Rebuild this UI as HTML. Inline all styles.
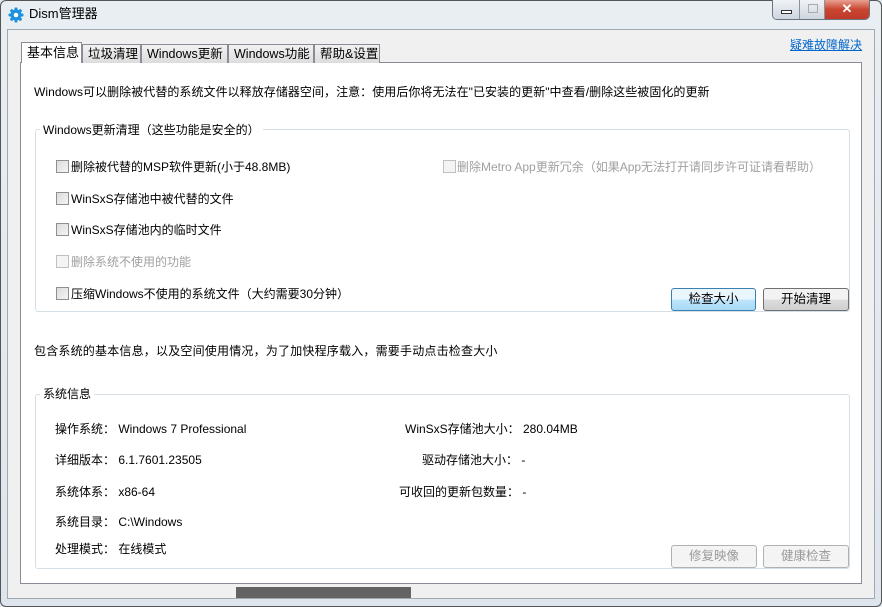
<!DOCTYPE html>
<html><head><meta charset="utf-8"><style>
*{margin:0;padding:0;box-sizing:border-box}
body{width:882px;height:607px;overflow:hidden;background:#dfe6ee;font-family:"Liberation Sans","Noto Sans CJK SC",sans-serif;font-size:12px;color:#000;position:relative}
.a{position:absolute}
.win{left:0;top:0;width:882px;height:607px;border:1px solid #555;border-radius:6px;background:linear-gradient(#e9eef3,#dfe5ec)}
.client{left:7px;top:29px;width:868px;height:570px;background:#f0f0f0;border:1px solid #a0a8b0}
.panel{left:20px;top:62px;width:842px;height:522px;background:#fff;border:1px solid #898c95}
.tab{top:44px;height:19px;border:1px solid #898c95;border-bottom:none;background:linear-gradient(#f2f2f2,#dcdcdc);font-size:12.5px;padding:1px 5px;line-height:16px;white-space:nowrap}
.group{border:1px solid #d5dfe5;border-radius:3px}
.leg{background:#fff;padding:0 3px;font-size:12px;line-height:14px}
.cb{width:13px;height:13px;border:1px solid #8e8f8f;background:linear-gradient(135deg,#dcdcdc,#f4f4f4)}
.t{font-size:12px;line-height:14px;white-space:nowrap}
.btn{height:23px;border:1px solid #707070;border-radius:3px;background:linear-gradient(#f2f2f2 50%,#dddddd 50%,#cfcfcf);text-align:center;line-height:21px;font-size:12.5px}
.dis{color:#a0a0a0}
.btnd{border-color:#adb2b5;background:#f4f4f4;color:#9a9a9a}
</style></head><body>
<div class="a win"></div>
<svg class="a" style="left:8px;top:7px" width="16" height="16" viewBox="0 0 16 16"><g fill="#1e90e0"><circle cx="8" cy="8" r="5.5"/><rect x="6.5" y="0.5" width="3" height="15" rx="1"/><rect x="0.5" y="6.5" width="15" height="3" rx="1"/><rect x="6.5" y="0.5" width="3" height="15" rx="1" transform="rotate(45 8 8)"/><rect x="6.5" y="0.5" width="3" height="15" rx="1" transform="rotate(-45 8 8)"/></g><circle cx="8" cy="8" r="2.3" fill="#fff"/></svg>
<div class="a t" style="left:29px;top:7px;font-size:13px">Dism管理器</div>
<div class="a" style="left:772px;top:0;width:98px;height:20px;border:1px solid #6a7480;border-top:none;border-radius:0 0 5px 5px;overflow:hidden;display:flex">
<div style="width:27px;background:linear-gradient(#f0f3f6,#cdd5de);border-right:1px solid #8a929c;position:relative"><div class="a" style="left:8px;top:10px;width:11px;height:4px;border:1px solid #333;background:#fff"></div></div>
<div style="width:25px;background:linear-gradient(#f0f3f6,#cdd5de);border-right:1px solid #8a929c;position:relative"><div class="a" style="left:8px;top:4px;width:10px;height:9px;border:1px solid #aaa"></div></div>
<div style="flex:1;background:linear-gradient(#e8a090,#c8452f 50%,#c0392b);color:#fff;text-align:center;font-weight:bold;font-size:13px;line-height:18px">✕</div></div>
<div class="a client"></div>
<div class="a t" style="left:790px;top:38px;color:#0066cc;text-decoration:underline">疑难故障解决</div>
<div class="a panel"></div>
<div class="a tab" style="left:21px;top:42px;height:21px;background:#fff;width:61px;font-size:13px;padding-top:2px">基本信息</div>
<div class="a tab" style="left:82px;width:59px">垃圾清理</div>
<div class="a tab" style="left:141px;width:87px">Windows更新</div>
<div class="a tab" style="left:228px;width:86px">Windows功能</div>
<div class="a tab" style="left:314px;width:66px">帮助&amp;设置</div>
<div class="a t" style="left:34px;top:85px;letter-spacing:0.05px">Windows可以删除被代替的系统文件以释放存储器空间，注意：使用后你将无法在"已安装的更新"中查看/删除这些被固化的更新</div>
<div class="a group" style="left:35px;top:129px;width:815px;height:183px"></div>
<div class="a leg" style="left:40px;top:123px">Windows更新清理（这些功能是安全的）</div>
<div class="a cb" style="left:56px;top:160px"></div><div class="a t" style="left:71px;top:160px">删除被代替的MSP软件更新(小于48.8MB)</div>
<div class="a cb" style="left:56px;top:192px"></div><div class="a t" style="left:71px;top:192px">WinSxS存储池中被代替的文件</div>
<div class="a cb" style="left:56px;top:223px"></div><div class="a t" style="left:71px;top:223px">WinSxS存储池内的临时文件</div>
<div class="a cb" style="left:56px;top:255px;background:#f4f4f4;border-color:#c0c0c0"></div><div class="a t dis" style="left:71px;top:255px">删除系统不使用的功能</div>
<div class="a cb" style="left:56px;top:287px"></div><div class="a t" style="left:71px;top:287px">压缩Windows不使用的系统文件（大约需要30分钟）</div>
<div class="a cb" style="left:443px;top:160px;background:#f4f4f4;border-color:#c0c0c0"></div><div class="a t dis" style="left:457px;top:160px">删除Metro App更新冗余（如果App无法打开请同步许可证请看帮助）</div>
<div class="a btn" style="left:671px;top:288px;width:85px;border-color:#3c7fb1;background:linear-gradient(#eaf6fd 50%,#bee6fd 50%,#a7d9f5)">检查大小</div>
<div class="a btn" style="left:763px;top:288px;width:86px">开始清理</div>
<div class="a t" style="left:34px;top:344px;letter-spacing:0.2px">包含系统的基本信息，以及空间使用情况，为了加快程序载入，需要手动点击检查大小</div>
<div class="a group" style="left:35px;top:394px;width:815px;height:175px"></div>
<div class="a leg" style="left:40px;top:387px">系统信息</div>
<div class="a t" style="left:55px;top:422px">操作系统：&nbsp;Windows 7 Professional</div>
<div class="a t" style="left:55px;top:453px">详细版本：&nbsp;6.1.7601.23505</div>
<div class="a t" style="left:55px;top:485px">系统体系：&nbsp;x86-64</div>
<div class="a t" style="left:55px;top:515px">系统目录：&nbsp;C:\Windows</div>
<div class="a t" style="left:55px;top:542px">处理模式：&nbsp;在线模式</div>
<div class="a t" style="left:405px;top:422px">WinSxS存储池大小：&nbsp;280.04MB</div>
<div class="a t" style="left:422px;top:453px">驱动存储池大小：&nbsp;-</div>
<div class="a t" style="left:399px;top:485px">可收回的更新包数量：&nbsp;-</div>
<div class="a btn btnd" style="left:671px;top:545px;width:86px">修复映像</div>
<div class="a btn btnd" style="left:763px;top:545px;width:86px">健康检查</div>
<div class="a" style="left:236px;top:587px;width:175px;height:11px;background:#636363"></div>
</body></html>
